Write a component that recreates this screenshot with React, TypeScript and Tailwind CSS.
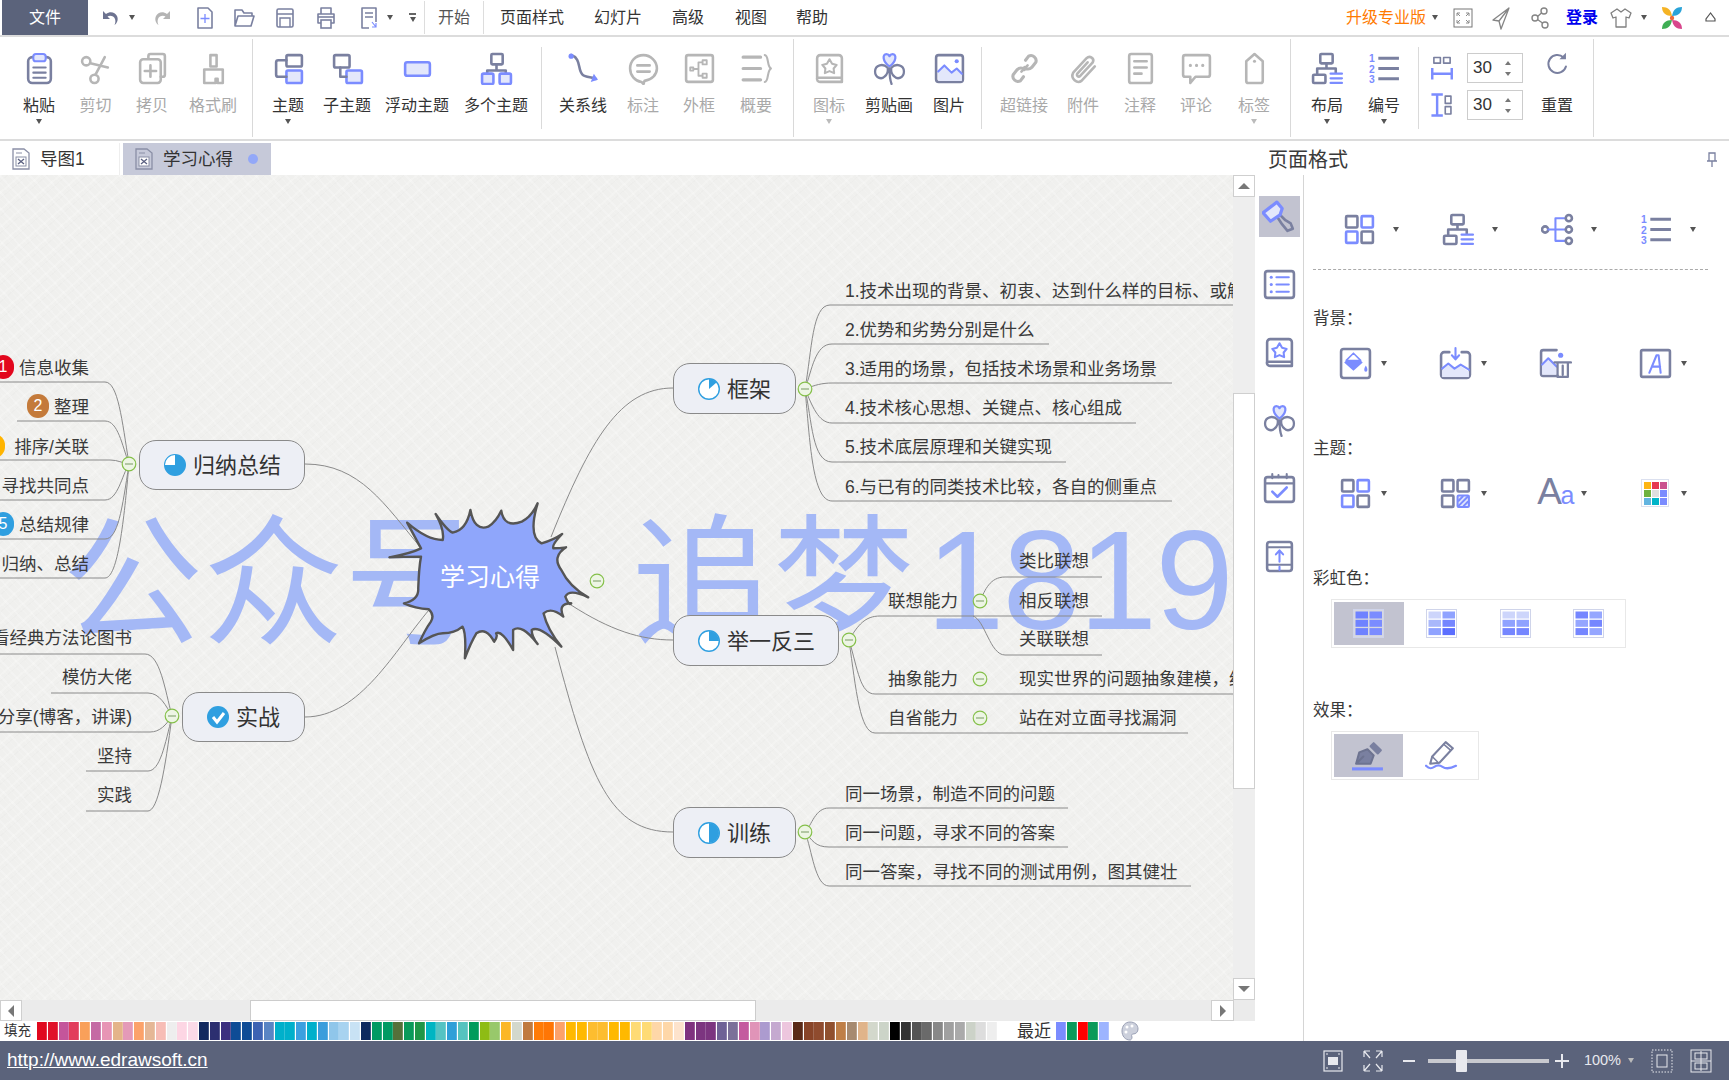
import React from "react";

const S = "#7a80a0";
const B = "#7b8cff";
const L = "#e3e7fb";
const G = "#b6b6b6";

type P = { s?: number; c?: string; children?: React.ReactNode };
const Ic = ({ s = 33, children }: P) => (
  <svg width={s} height={s} viewBox="0 0 32 32" fill="none" strokeWidth={2} strokeLinecap="round" strokeLinejoin="round" className="shrink-0">
    {children}
  </svg>
);

const Caret = ({ light }: { light?: boolean }) => (
  <span className={`block h-0 w-0 shrink-0 border-x-[3.5px] border-t-[5px] border-x-transparent ${light ? "border-t-[#bbbbbb]" : "border-t-[#555555]"}`} />
);

/* ---------- ribbon icons ---------- */
const Paste = () => (
  <Ic>
    <rect x="5" y="5" width="22" height="25" rx="4" stroke={S} strokeWidth="2.5" />
    <rect x="10" y="2" width="12" height="7" rx="2.5" fill={L} stroke={B} />
    <path d="M10 15h12M10 20h12M10 25h12" stroke={S} />
  </Ic>
);
const Cut = () => (
  <Ic>
    <circle cx="7" cy="9" r="4" stroke={G} strokeWidth="2.5" />
    <circle cx="15" cy="26" r="4" stroke={G} strokeWidth="2.5" />
    <path d="M11 11l17 4M16 22l9-17" stroke={G} strokeWidth="2.5" />
  </Ic>
);
const Copy = () => (
  <Ic>
    <path d="M12 6V4a2 2 0 012-2h12a2 2 0 012 2v18a2 2 0 01-2 2h-2" stroke={G} strokeWidth="2.5" />
    <rect x="4" y="7" width="20" height="23" rx="3" stroke={G} strokeWidth="2.5" />
    <path d="M14 13v11M8.500 18.500h11" stroke={G} strokeWidth="2.5" />
  </Ic>
);
const Brush = () => (
  <Ic>
    <path d="M13 3h6v11h-6zM7 17h18v13h-5v-4h-2v4H7z" stroke={G} strokeWidth="2.5" />
  </Ic>
);
const Topic = () => (
  <Ic>
    <rect x="14" y="3" width="15" height="11" rx="1.500" stroke={S} strokeWidth="2.5" />
    <rect x="14" y="18" width="15" height="12" rx="1.500" fill={L} stroke={B} strokeWidth="2.5" />
    <path d="M14 8H6a2 2 0 00-2 2v12a2 2 0 002 2h8" stroke={S} strokeWidth="2.5" />
  </Ic>
);
const SubTopic = () => (
  <Ic>
    <rect x="3" y="3" width="15" height="12" rx="1.500" stroke={S} strokeWidth="2.5" />
    <rect x="15" y="18" width="15" height="12" rx="1.500" fill={L} stroke={B} strokeWidth="2.5" />
    <path d="M9 15v9h6" stroke={S} strokeWidth="2.5" />
  </Ic>
);
const Float = () => (
  <Ic>
    <rect x="4" y="10" width="24" height="13" rx="2" fill={L} stroke={B} strokeWidth="2.5" />
  </Ic>
);
const Multi = () => (
  <Ic>
    <rect x="11" y="2" width="11" height="10" rx="1" stroke={S} strokeWidth="2.5" />
    <path d="M16 12v6M7 22v-4h18v4" stroke={S} strokeWidth="2.5" />
    <rect x="2" y="21" width="11" height="10" rx="1.500" fill={L} stroke={B} strokeWidth="2.5" />
    <rect x="19" y="21" width="11" height="10" rx="1.500" fill={L} stroke={B} strokeWidth="2.5" />
  </Ic>
);
const Relation = () => (
  <Ic>
    <path d="M4 3c10 3 6 14 11 19 3 3 9 2 13 4" stroke={S} strokeWidth="2.5" />
    <circle cx="4" cy="4" r="2.500" fill={B} />
    <path d="M26 21l4 6-7 2z" fill={B} />
  </Ic>
);
const Callout = () => (
  <Ic>
    <path d="M16 3C8 3 3 9 3 16c0 7 5 12 11 13l2 2 1-3c7-1 12-6 12-12 0-7-6-13-13-13z" stroke={G} strokeWidth="2.5" />
    <path d="M10 13h12M10 19h12" stroke={G} strokeWidth="2.5" />
  </Ic>
);
const Frame = () => (
  <Ic>
    <rect x="3" y="3" width="26" height="26" rx="2" stroke={G} strokeWidth="2.5" />
    <path d="M7 15h3v3H7zM10 16.500h5M15 10v13M15 10h3M15 23h3M19 8h4v4h-4zM19 21h4v4h-4z" stroke={G} strokeWidth="1.800" />
  </Ic>
);
const Summary = () => (
  <Ic>
    <path d="M3 5h17M3 16h17M3 27h17" stroke={G} strokeWidth="3" />
    <path d="M24 3c4 0 2 11 6 13-4 2-2 13-6 13" stroke={G} strokeWidth="2" />
  </Ic>
);
const Book = ({ c = G, a = G }: { c?: string; a?: string }) => (
  <Ic>
    <path d="M4 25V6a3 3 0 013-3h18a3 3 0 013 3v23H7a3 3 0 01-3-4zM4 25h24" stroke={c} strokeWidth="2.5" />
    <path d="M16 7l2.500 4.500 4.500 1-3 3.500.5 4.500-4.500-2-4.500 2 .5-4.500-3-3.500 4.500-1z" stroke={a} strokeWidth="2" />
  </Ic>
);
const Clover = () => (
  <Ic>
    <path d="M16 14c-7-5-7-12-3-12 2 0 3 2 3 2s1-2 3-2c4 0 4 7-3 12z" stroke={B} strokeWidth="2.2" fill={L} />
    <path d="M14 15c-4-4-12-3-12 4 0 6 6 8 9 5 3-2 4-6 3-9zM18 15c4-4 12-3 12 4 0 6-6 8-9 5-3-2-4-6-3-9zM16 16c0 6 0 10 2 15" stroke={S} strokeWidth="2.2" />
  </Ic>
);
const Pic = () => (
  <Ic>
    <rect x="3" y="3" width="26" height="26" rx="2.500" stroke={S} strokeWidth="2.5" />
    <path d="M5 19l6-6 7 7 5-4 5 5v7H5z" fill={L} />
    <path d="M5 19l6-6 7 7 5-4 5 5" stroke={B} strokeWidth="2" />
    <circle cx="23" cy="9" r="2" fill={B} />
  </Ic>
);
const Chain = () => (
  <Ic>
    <path d="M17 8l3-4a5 5 0 017 6l-4 5a5 5 0 01-7 0M15 24l-3 4a5 5 0 01-7-6l4-5a5 5 0 017 0" stroke={G} strokeWidth="3" />
    <path d="M13 19l6-6" stroke={G} strokeWidth="2.5" />
  </Ic>
);
const Clip = () => (
  <Ic>
    <path d="M27 14L14 28c-4 3-11-2-8-8L19 6c3-3 8 0 6 4L13 23c-2 2-4 0-3-2l10-11" stroke={G} strokeWidth="2.5" />
  </Ic>
);
const Note = () => (
  <Ic>
    <rect x="5" y="2" width="22" height="28" rx="2" stroke={G} strokeWidth="2.5" />
    <path d="M10 9h12M10 15h12M10 21h7" stroke={G} strokeWidth="2.5" />
  </Ic>
);
const Comment = () => (
  <Ic>
    <path d="M5 3h22a2 2 0 012 2v17a2 2 0 01-2 2H15l-5 6v-6H5a2 2 0 01-2-2V5a2 2 0 012-2z" stroke={G} strokeWidth="2.5" />
    <path d="M10 13h.1M16 13h.1M22 13h.1" stroke={G} strokeWidth="3" />
  </Ic>
);
const Tag = () => (
  <Ic>
    <path d="M8 9l8-7 8 7v19a2 2 0 01-2 2H10a2 2 0 01-2-2z" stroke={G} strokeWidth="2.5" />
    <circle cx="16" cy="9" r="1.500" fill={G} />
  </Ic>
);
const Layout = () => (
  <Ic>
    <rect x="9" y="2" width="12" height="9" rx="1" stroke={S} strokeWidth="2.5" />
    <path d="M15 11v5M6 22v-6h18v4" stroke={S} strokeWidth="2.5" />
    <rect x="2" y="22" width="12" height="8" rx="1" stroke={S} strokeWidth="2.5" />
    <path d="M19 21h11M19 25.500h11M19 30h11" stroke={B} strokeWidth="2.2" />
  </Ic>
);
const NumList = () => (
  <Ic>
    <path d="M10 6h20M10 16h20M10 26h20" stroke={S} strokeWidth="3" strokeLinecap="butt" />
    <text x="1" y="10" fontSize="10" fontWeight="700" fill={B} fontFamily="Liberation Sans">1</text>
    <text x="1" y="20" fontSize="10" fontWeight="700" fill={B} fontFamily="Liberation Sans">2</text>
    <text x="1" y="30" fontSize="10" fontWeight="700" fill={B} fontFamily="Liberation Sans">3</text>
  </Ic>
);
const SpaceH = () => (
  <Ic s={26}>
    <rect x="6" y="3" width="8" height="7" stroke={S} strokeWidth="2" />
    <rect x="18" y="3" width="8" height="7" stroke={S} strokeWidth="2" />
    <path d="M4 16v14M28 16v14M4 23h24" stroke={B} strokeWidth="3" strokeLinecap="butt" />
  </Ic>
);
const SpaceV = () => (
  <Ic s={26}>
    <rect x="20" y="5" width="7" height="9" stroke={S} strokeWidth="2" />
    <rect x="20" y="18" width="7" height="9" stroke={S} strokeWidth="2" />
    <path d="M3 3h14M3 29h14M10 3v26" stroke={B} strokeWidth="3" strokeLinecap="butt" />
  </Ic>
);
const Reset = () => (
  <svg width="26" height="26" viewBox="0 0 32 32" fill="none" className="shrink-0">
    <path d="M24 8a11 11 0 10 3 11" stroke={S} strokeWidth="2.5" strokeLinecap="round" />
    <path d="M27 2v8h-8z" fill={S} />
  </svg>
);

/* ---------- small top bar icons ---------- */
const D = "#858585";
const Undo = ({ flip, c = "#6d7390" }: { flip?: boolean; c?: string }) => (
  <svg width="20" height="20" viewBox="0 0 20 20" fill="none" className={`shrink-0 ${flip ? "-scale-x-100" : ""}`}>
    <path d="M3 3v8h7L7.500 8.500C10 7 14 8 15 11c.7 2 .5 4-.5 6 3-2 4-6 2.500-9C15 4 10 3 6 6z" fill={c} />
  </svg>
);
const TopNew = () => (
  <svg width="20" height="24" viewBox="0 0 20 24" fill="none" className="shrink-0">
    <path d="M3 2h10l4 4v16H3z" stroke={S} strokeWidth="1.600" strokeLinejoin="round" />
    <path d="M10 8v9M5.500 12.500h9" stroke={B} strokeWidth="1.300" />
  </svg>
);
const TopOpen = () => (
  <svg width="22" height="22" viewBox="0 0 22 22" fill="none" className="shrink-0">
    <path d="M2 19V3h7l2 3h8v3M2 19l3-10h16l-3 10z" stroke={S} strokeWidth="1.600" strokeLinejoin="round" />
  </svg>
);
const TopSave = () => (
  <svg width="20" height="22" viewBox="0 0 20 22" fill="none" className="shrink-0">
    <rect x="2" y="2" width="16" height="18" rx="1.500" stroke={S} strokeWidth="1.600" />
    <path d="M2 7h16M5 20V11h10v9" stroke={S} strokeWidth="1.400" />
  </svg>
);
const TopPrint = () => (
  <svg width="22" height="24" viewBox="0 0 22 24" fill="none" className="shrink-0">
    <path d="M6 8V2h10v6M6 17H3V8h16v9h-3" stroke={S} strokeWidth="1.600" strokeLinejoin="round" />
    <rect x="6" y="14" width="10" height="8" stroke={S} strokeWidth="1.600" />
    <path d="M3 11h16" stroke={S} strokeWidth="1.600" />
  </svg>
);
const TopPage = () => (
  <svg width="20" height="24" viewBox="0 0 20 24" fill="none" className="shrink-0">
    <path d="M10 22H3V2h14v14" stroke={S} strokeWidth="1.600" strokeLinejoin="round" />
    <path d="M6 7h8M6 11h8" stroke={S} strokeWidth="1.400" />
    <path d="M13 16l4 5M17 17v4h-4" stroke={B} strokeWidth="1.200" />
  </svg>
);
const More = () => (
  <span className="flex w-[7px] shrink-0 flex-col items-center gap-[2px]">
    <span className="h-[1.500px] w-[7px] bg-[#666666]" />
    <Caret />
  </span>
);
const FullBox = () => (
  <svg width="20" height="22" viewBox="0 0 20 22" fill="none" className="shrink-0">
    <rect x="1" y="2" width="18" height="18" stroke="#777777" strokeWidth="1" />
    <path d="M4 6l3 3M4 6h3M4 6v3M16 6l-3 3M16 6h-3M16 6v3M4 16l3-3M4 16h3M4 16v-3M16 16l-3-3M16 16h-3M16 16v-3" stroke="#8a8a8a" />
  </svg>
);
const Send = () => (
  <svg width="22" height="24" viewBox="0 0 22 24" fill="none" className="shrink-0">
    <path d="M19 2L3 14l6 1 2 8zM19 2L9 15M19 2l-8 21" stroke={D} strokeWidth="1.300" strokeLinejoin="round" />
  </svg>
);
const Share = () => (
  <svg width="20" height="24" viewBox="0 0 20 24" fill="none" className="shrink-0">
    <circle cx="14" cy="5" r="3" stroke={D} strokeWidth="1.400" />
    <circle cx="5" cy="12" r="3" stroke={D} strokeWidth="1.400" />
    <circle cx="15" cy="19" r="3" stroke={D} strokeWidth="1.400" />
    <path d="M7.500 10.500L11.500 7M7.500 13.500l5 3.500" stroke={D} strokeWidth="1.400" />
  </svg>
);
const Shirt = () => (
  <svg width="22" height="22" viewBox="0 0 22 22" fill="none" className="shrink-0">
    <path d="M7 2l4 3 4-3 6 4-2 5-3-1v10H6V10l-3 1-2-5z" stroke="#808080" strokeWidth="1.300" strokeLinejoin="round" />
  </svg>
);
const Logo = () => (
  <svg width="22" height="24" viewBox="0 0 22 24" className="shrink-0">
    <path d="M1 1c6 0 9 3 10 9-6 0-10-3-10-9z" fill="#f5b324" />
    <path d="M21 1c-6 0-9 3-10 9 6 0 10-3 10-9z" fill="#2aa3d8" />
    <path d="M1 23c6 0 9-3 10-9-6 0-10 3-10 9z" fill="#3fae54" />
    <path d="M21 23c-6 0-9-3-10-9 6 0 10 3 10 9z" fill="#d8468c" />
    <circle cx="11" cy="12" r="2.200" fill="#ef6a3a" />
  </svg>
);
const Up = () => (
  <svg width="13" height="13" viewBox="0 0 13 13" fill="none" className="shrink-0">
    <path d="M6.500 2L2 8v2h9V8z" stroke="#555555" strokeWidth="1.200" />
  </svg>
);
const Doc = () => (
  <svg width="20" height="24" viewBox="0 0 20 24" fill="none" className="shrink-0">
    <path d="M2 2h11l5 4v16H2z" stroke="#8a8fa6" strokeWidth="1.300" />
    <path d="M5 6h6" stroke="#8a8fa6" />
    <rect x="5" y="10" width="10" height="9" fill="#ffffff" stroke="#8a8fa6" />
    <path d="M7 12l6 5M13 12l-6 5" stroke="#5a6080" strokeWidth="1.300" />
  </svg>
);

/* ---------- ribbon parts ---------- */
const RB = ({ w, icon, label, off, caret }: { w: string; icon: React.ReactNode; label: string; off?: boolean; caret?: boolean }) => (
  <div className={`flex shrink-0 flex-col items-center pt-[16px] ${w}`}>
    <div className="flex h-[30px] items-center justify-center">{icon}</div>
    <div className={`mt-[13px] whitespace-nowrap text-[16px] leading-[20px] ${off ? "text-[#a9a9a9]" : "text-[#333333]"}`}>{label}</div>
    {caret ? <div className="mt-[3px]"><Caret light={off} /></div> : null}
  </div>
);
const SepFull = ({ m }: { m: string }) => <div className={`h-[98px] w-px shrink-0 self-center bg-[#d9d9d9] ${m}`} />;
const SepShort = ({ m }: { m: string }) => <div className={`h-[82px] w-px shrink-0 self-center bg-[#dadada] ${m}`} />;

const Spin = () => (
  <div className="flex h-[30px] w-[56px] items-center justify-between border border-[#cccccc] pl-[5px] pr-[11px] text-[17px] text-[#333333]">
    <span>30</span>
    <span className="flex flex-col gap-[7px]">
      <span className="block h-0 w-0 border-x-[3px] border-b-[4px] border-x-transparent border-b-[#777777]" />
      <span className="block h-0 w-0 border-x-[3px] border-t-[4px] border-x-transparent border-t-[#777777]" />
    </span>
  </div>
);

/* ---------- right rail and panel icons ---------- */
const RailBrush = () => (
  <Ic s={34}>
    <path d="M17 14l5 5 5 3 2 5-5 2-5-6-4-6" stroke={S} strokeWidth="2.5" />
    <path d="M1 12L14 2l5 6-2 6-9 6z" fill={L} stroke={B} strokeWidth="3" />
  </Ic>
);
const RailList = () => (
  <Ic>
    <rect x="2" y="3" width="28" height="26" rx="2.500" stroke={S} strokeWidth="2.5" />
    <path d="M13 9h12M13 16h12M13 23h12" stroke={B} strokeWidth="2" />
    <circle cx="8" cy="9" r="1.500" fill={B} />
    <circle cx="8" cy="16" r="1.500" fill={B} />
    <circle cx="8" cy="23" r="1.500" fill={B} />
  </Ic>
);
const RailCal = () => (
  <Ic>
    <rect x="2" y="5" width="28" height="24" rx="2.500" stroke={S} strokeWidth="2.5" />
    <path d="M2 11h28M9 2v4M23 2v4M15 3v2" stroke={S} strokeWidth="2" />
    <path d="M9 19l5 5 9-9" stroke={B} strokeWidth="2.5" />
  </Ic>
);
const RailUp = () => (
  <Ic>
    <rect x="4" y="2" width="24" height="28" rx="2.500" stroke={S} strokeWidth="2.5" />
    <path d="M4 7h24M4 24h24" stroke={S} strokeWidth="2" />
    <path d="M16 21V11M12.500 14L16 10l3.500 4M16 26v3" stroke={B} strokeWidth="2" />
  </Ic>
);
const Grid4 = ({ a = [1, 0, 0, 1] }: { a?: number[] }) => (
  <Ic>
    {[[3, 3], [18, 3], [3, 18], [18, 18]].map(([x, y], i) => (
      <rect key={i} x={x} y={y} width="11" height="11" rx="1" stroke={a[i] ? B : S} strokeWidth="2.5" />
    ))}
  </Ic>
);
const Grid4b = () => (
  <Ic>
    <rect x="3" y="3" width="11" height="11" rx="1" stroke={S} strokeWidth="2.5" />
    <rect x="18" y="3" width="11" height="11" rx="1" stroke={S} strokeWidth="2.5" />
    <rect x="3" y="18" width="11" height="11" rx="1" stroke={S} strokeWidth="2.5" />
    <rect x="18" y="18" width="11" height="11" rx="1" fill={L} stroke={B} strokeWidth="2" />
    <path d="M19 28l9-9M19 23l4-4M24 28l4-4" stroke={B} strokeWidth="2" />
  </Ic>
);
const Tree = () => (
  <Ic>
    <circle cx="4" cy="16" r="3" stroke={S} strokeWidth="2.5" />
    <path d="M7 16h7M14 5h9M14 16h9M14 27h9M14 5v22" stroke={B} strokeWidth="2" />
    <circle cx="27" cy="5" r="3" stroke={S} strokeWidth="2.5" />
    <circle cx="27" cy="16" r="3" stroke={S} strokeWidth="2.5" />
    <circle cx="27" cy="27" r="3" stroke={S} strokeWidth="2.5" />
  </Ic>
);
const BgFill = () => (
  <Ic>
    <rect x="2" y="2" width="28" height="28" rx="2.500" stroke={S} strokeWidth="2.5" />
    <path d="M5 15l9-9 9 9-9 8z" fill={B} />
    <path d="M7 13h14l-7-7z" fill="#ffffff" stroke={B} strokeWidth="1.500" />
    <path d="M26 18c-2 3-2 6 0 6s2-3 0-6z" fill={B} />
  </Ic>
);
const BgImg = () => (
  <Ic>
    <path d="M10 5H5a3 3 0 00-3 3v19a3 3 0 003 3h22a3 3 0 003-3V8a3 3 0 00-3-3h-5" stroke={S} strokeWidth="2.5" />
    <path d="M3 23l6-6 6 5 5-4 9 6v5H3z" fill={L} />
    <path d="M3 21l6-5 6 5 6-4 8 5" stroke={B} strokeWidth="2" />
    <path d="M16 1v10M12.500 8l3.500 4 3.500-4" stroke={B} strokeWidth="2" />
  </Ic>
);
const BgDel = () => (
  <Ic>
    <path d="M18 28H4a2 2 0 01-2-2V5a2 2 0 012-2h13" stroke={S} strokeWidth="2.5" />
    <path d="M3 17l6-6 8 8v8H3z" fill={L} />
    <path d="M3 17l6-6 8 8" stroke={B} strokeWidth="2" />
    <circle cx="21" cy="8" r="2.500" fill={B} />
    <path d="M15 15h16M18 15v14h10V15M23 18v9" stroke={S} strokeWidth="2.2" />
  </Ic>
);
const BgA = () => (
  <Ic>
    <rect x="2" y="3" width="28" height="26" rx="1.500" stroke={S} strokeWidth="2.5" />
    <path d="M10 25L17 8h2l2 17M12.500 19h8" stroke={B} strokeWidth="2" />
  </Ic>
);
const Aa = () => (
  <span className="flex h-[32px] w-[32px] items-end justify-center whitespace-nowrap leading-none tracking-[-1.500px]">
    <span className="text-[37px] leading-[34px] text-[#7a80a0]">A</span>
    <span className="text-[25px] leading-[28px] text-[#7b8cff]">a</span>
  </span>
);
const ThemeColors = () => {
  const c = ["#fdb515", "#e63950", "#c9518f", "#6eb23f", "#dedede", "#7b8cff", "#62b4e0", "#00b4c8", "#7b8cff"];
  return (
    <span className="grid h-[28px] w-[28px] grid-cols-3 gap-[1px] border border-[#dbe0ef] p-[1.500px]">
      {c.map((x, i) => (
        <svg key={i} viewBox="0 0 8 7" className="h-full w-full" preserveAspectRatio="none"><rect width="8" height="7" fill={x} /></svg>
      ))}
    </span>
  );
};
const Rainbow = ({ c }: { c: string[] }) => (
  <svg width="31" height="29" viewBox="0 0 31 29" className="shrink-0">
    <rect x="0.500" y="0.500" width="30" height="28" fill="#ffffff" fillOpacity="0.350" stroke="#cfd4ea" />
    {c.map((x, i) => (
      <rect key={i} x={i % 2 ? 16.500 : 2.500} y={2.500 + Math.floor(i / 2) * 8.300} width="12.500" height="7" fill={x} />
    ))}
  </svg>
);
const PenA = () => (
  <Ic>
    <path d="M4 24l3-11 8-3 6 6-3 8zM4 24l7-7" stroke="#6d7390" strokeWidth="2" fill="#7a80a0" />
    <path d="M18 7l3-3 7 7-3 3z" fill="#7a80a0" stroke="#7a80a0" />
    <path d="M0 29h30" stroke={B} strokeWidth="3" strokeLinecap="butt" />
  </Ic>
);
const PenB = () => (
  <Ic>
    <path d="M5 24l2-7L20 3l7 6-13 14z" stroke={S} strokeWidth="2" />
    <path d="M18 5l7 6M7 17l6 6" stroke={S} strokeWidth="1.500" />
    <path d="M1 26c3 3 5 3 8 1s5-2 8 0 7 2 13-1" stroke={B} strokeWidth="2.2" />
  </Ic>
);

const IconCell = ({ icon, caret, w, m }: { icon: React.ReactNode; caret?: boolean; w: string; m: string }) => (
  <div className={`flex h-[32px] shrink-0 items-center ${w}`}>
    <div className="flex h-[32px] w-[32px] items-center justify-center">{icon}</div>
    {caret ? <div className={m}><Caret /></div> : null}
  </div>
);

/* ---------- status bar icons ---------- */
const W = "#e8e9ee";
const StatusFit = () => (
  <svg width="20" height="22" viewBox="0 0 20 22" fill="none" className="shrink-0">
    <rect x="1" y="1" width="18" height="20" stroke={W} strokeWidth="1.200" />
    <rect x="5" y="7" width="10" height="8" fill={W} />
    <path d="M3 4h2M15 4h2M3 18h2M15 18h2" stroke={W} />
  </svg>
);
const StatusFull = () => (
  <svg width="22" height="24" viewBox="0 0 22 24" fill="none" className="shrink-0">
    <path d="M2 2l6 7M2 2h6M2 2v6M20 2l-6 7M20 2h-6M20 2v6M2 22l6-7M2 22h6M2 22v-6M20 22l-6-7M20 22h-6M20 22v-6" stroke={W} strokeWidth="1.200" />
  </svg>
);
const StatusPage = () => (
  <svg width="22" height="24" viewBox="0 0 22 24" fill="none" className="shrink-0">
    <rect x="1" y="1" width="20" height="22" stroke={W} strokeDasharray="1.500 1.500" />
    <rect x="6" y="6" width="10" height="12" stroke={W} />
  </svg>
);
const StatusPage2 = () => (
  <svg width="22" height="24" viewBox="0 0 22 24" fill="none" className="shrink-0">
    <rect x="1" y="1" width="20" height="22" stroke={W} />
    <rect x="5" y="4" width="12" height="6" stroke={W} />
    <rect x="5" y="14" width="12" height="6" stroke={W} />
    <path d="M1 12h20M11 2v20" stroke={W} />
  </svg>
);
const PaletteIcon = () => (
  <svg width="18" height="20" viewBox="0 0 18 20" fill="none" className="shrink-0">
    <path d="M9 1c5 0 8 3 8 7 0 3-2 5-5 5-1 0-2 1-1 3 0 2-1 3-2 3-5 0-8-4-8-9s3-9 8-9z" fill="#ccd0dc" stroke="#9aa0b5" />
    <circle cx="6" cy="6" r="1.500" fill="#ffffff" />
    <circle cx="11" cy="5" r="1.500" fill="#ffffff" />
    <circle cx="5" cy="11" r="1.500" fill="#ffffff" />
  </svg>
);

const SWATCH = [
  "#e0081e","#e0122a","#c4559b","#e23d5c","#f9a05a","#c56aa4","#e795b5","#e4b48a","#e49ab8","#fca26a","#e5b796","#f7bdb6","#eeeeee","#fdd6e4","#fbdae8",
  "#12295f","#2c2f70","#3b2f7f","#0e4c96","#0e4c96","#3d63b3","#5985c4","#00b0cb","#00b0cb","#3ba0e0","#00b0cb","#3a9ddc","#8fc6ea","#a8d3f0","#c8e2f4",
  "#0e295e","#009a63","#009a63","#55703a","#0a9a5a","#1f9647","#00b5c2","#55c3c3","#2f9fd8","#55c3bf","#009b5c","#8ebc14","#98c86b","#fbb726","#d3d8cc",
  "#c07a3e","#ff7b06","#ff7605","#fca26a","#ffb900","#ffb900","#fdbd2f","#fdbd2f","#ffb900","#ffb900","#fedb75","#fedb75","#fed7a8","#fed7a8","#fde3cc",
  "#7f327f","#7c3580","#7c3580","#6f6296","#7b7099","#c45a9f","#e094b8","#ac9bcf","#c5a9d0","#edc6de",
  "#5a2a18","#884428","#8f4b2e","#90502e","#bf7f47","#a68a70","#e0b48a","#d3d8cc","#ccd4c8",
  "#000000","#333333","#555555","#6a6a6a","#888888","#a0a0a0","#aaaaaa","#ccd2c8","#dddddd","#eeeeee",
];

/* ---------- mind map ---------- */
const Pie = ({ kind }: { kind: "q3" | "e" | "q" | "h" | "ok" }) => (
  <svg width="22" height="24" viewBox="0 0 22 24" className="shrink-0">
    {kind === "ok" ? (
      <>
        <circle cx="11" cy="12" r="11" fill="#2f9fe0" />
        <path d="M6 12l4 5 7-9" stroke="#ffffff" strokeWidth="3" fill="none" />
      </>
    ) : (
      <>
        <circle cx="11" cy="12" r="10.300" fill={kind === "q3" ? "#2f9fe0" : "#ffffff"} stroke="#2f9fe0" strokeWidth="1.400" />
        {kind === "q3" ? <path d="M11 12V2a10 10 0 00-10 10z" fill="#ffffff" /> : null}
        {kind === "e" ? <path d="M11 12V2a10 10 0 017.500 3.500z" fill="#2f9fe0" /> : null}
        {kind === "q" ? <path d="M11 12V2a10 10 0 0110 10z" fill="#2f9fe0" /> : null}
        {kind === "h" ? <path d="M11 2a10 10 0 010 20z" fill="#2f9fe0" /> : null}
      </>
    )}
  </svg>
);

const Node = ({ cls, kind, text }: { cls: string; kind: "q3" | "e" | "q" | "h" | "ok"; text: string }) => (
  <div className={`absolute flex items-center gap-[7px] rounded-[17px] border border-[#8a8a8a] bg-[#edeff5] pl-[24px] text-[22px] leading-none text-[#333333] ${cls}`}>
    <Pie kind={kind} />
    <span className="whitespace-nowrap pt-[2px]">{text}</span>
  </div>
);

const T = ({ cls, children }: { cls: string; children: React.ReactNode }) => (
  <div className={`absolute whitespace-nowrap text-[17.500px] leading-[20px] text-[#3a3a3a] ${cls}`}>{children}</div>
);

const Dot = ({ cls, bg, n }: { cls: string; bg: string; n: string }) => (
  <div className={`absolute flex h-[24px] w-[22px] items-center justify-center rounded-full text-[16px] text-white ${cls} ${bg}`}>{n}</div>
);

const LINES = [
  "M0 382H105C118 382 122 420 129 464","M17 421H105C118 421 122 445 129 464","M0 460H110C118 460 122 463 129 464","M0 500H105C118 500 122 475 129 464","M0 539H105C118 539 122 510 129 464","M0 578H105C118 578 124 520 129 464",
  "M0 654H145C160 654 165 690 172 716","M51 693H148C160 693 166 706 172 716","M0 732H150C160 732 166 725 172 716","M86 771H148C160 771 165 745 172 716","M86 811H148C158 811 165 770 172 716",
  "M305 464C360 464 385 505 421 548","M305 717C360 717 395 650 429 610","M673 388C620 388 590 440 551 537","M673 640C640 640 610 630 571 605","M673 832C610 832 590 780 555 647",
  "M805 389C812 350 812 305 830 305H1233","M805 389C812 370 815 344 832 344H1049","M805 389C815 385 822 383 832 383H1172","M805 389C812 405 818 423 832 423H1136","M805 389C812 420 812 462 832 462H1066","M805 389C810 440 812 501 832 501H1172",
  "M805 832C812 825 815 808 829 808H1068","M805 832C812 840 815 847 829 847H1068","M805 832C812 850 815 886 829 886H1191",
  "M849 640C858 625 865 616 880 616H1102","M980 601C985 590 990 577 1005 577H1102","M973 616C985 620 990 655 1005 655H1102","M849 640C858 670 860 694 875 694H1233","M849 640C856 690 860 733 875 733H1188",
];
const COLLAPSE: [number, number][] = [[129,464],[172,716],[597,581],[805,389],[849,640],[980,601],[980,679],[980,718],[805,832]];

const Burst = () => (
  <g transform="translate(0 340) scale(0.3953 0.3333)">
    <path
      vectorEffect="non-scaling-stroke"
      d="M1145 578Q1180 570 1190 510Q1200 575 1235 560Q1255 545 1268 512Q1275 565 1320 545Q1345 530 1360 490Q1335 590 1370 610Q1400 600 1422 582Q1395 615 1400 625Q1415 625 1432 622Q1395 650 1420 690Q1440 740 1488 772Q1440 745 1430 770Q1440 800 1445 790Q1410 790 1425 830Q1395 800 1375 820Q1385 870 1420 920Q1365 855 1345 870Q1345 890 1360 912Q1320 850 1298 870Q1298 900 1298 930Q1270 870 1255 880Q1260 890 1250 905Q1230 860 1205 880Q1190 910 1176 955Q1180 880 1170 860Q1150 880 1120 880Q1100 880 1060 910Q1075 870 1090 845Q1100 825 1085 808Q1050 805 1022 790Q1060 780 1058 745Q1060 680 1065 650Q1020 650 985 652Q1040 640 1065 625Q1040 570 1030 548Q1080 600 1120 600Q1125 570 1102 522Q1130 570 1145 578Z"
      fill="#8fa6fb"
      stroke="#555555"
      strokeWidth="2.400"
      strokeLinejoin="round"
    />
  </g>
);

const MindMap = () => (
  <div className="relative h-full w-[1233px] shrink-0 overflow-hidden bg-[#f0f0ee] bg-[repeating-linear-gradient(47deg,rgba(255,255,255,0.22)_0px,rgba(255,255,255,0.22)_2px,transparent_2px,transparent_7px,rgba(255,255,255,0.12)_7px,rgba(255,255,255,0.12)_8px,transparent_8px,transparent_11px),repeating-linear-gradient(-41deg,rgba(255,255,255,0.2)_0px,rgba(255,255,255,0.2)_2px,transparent_2px,transparent_9px,rgba(120,120,120,0.025)_9px,rgba(120,120,120,0.025)_10px,transparent_10px,transparent_13px)]">
    <div className="absolute left-[62px] top-[320px] whitespace-nowrap text-[141px] leading-[170px] text-[#a4b8f6]">
      公众号　<span className="ml-[6px]">追梦</span><span className="ml-[12px] align-[4px] tracking-[-2px]">1819</span>
    </div>
    <svg className="absolute left-0 top-[-175px]" width="1233" height="1000" viewBox="0 0 1233 1000" fill="none">
      {LINES.map((d, i) => (
        <path key={i} d={d} stroke="#8a8a8a" strokeWidth="1" />
      ))}
      <Burst />
      {COLLAPSE.map(([x, y], i) => (
        <g key={i}>
          <circle cx={x} cy={y} r="6.800" fill="#edf5e4" stroke="#85c04a" strokeWidth="1.200" />
          <path d={`M${x - 4} ${y}h8`} stroke="#8aa878" strokeWidth="1.200" />
        </g>
      ))}
    </svg>
    <div className="absolute left-[440px] top-[384px] whitespace-nowrap text-[25px] leading-[36px] text-white">学习心得</div>

    <Node cls="left-[139px] top-[265px] h-[50px] w-[166px]" kind="q3" text="归纳总结" />
    <Node cls="left-[182px] top-[517px] h-[50px] w-[123px]" kind="ok" text="实战" />
    <Node cls="left-[673px] top-[188px] h-[51px] w-[123px]" kind="e" text="框架" />
    <Node cls="left-[673px] top-[440px] h-[51px] w-[166px]" kind="q" text="举一反三" />
    <Node cls="left-[673px] top-[632px] h-[51px] w-[123px]" kind="h" text="训练" />

    <Dot cls="left-[-8px] top-[180px]" bg="bg-[#e2071d]" n="1" />
    <T cls="right-[1144px] top-[183px]">信息收集</T>
    <Dot cls="left-[27px] top-[219px]" bg="bg-[#c47a3a]" n="2" />
    <T cls="right-[1144px] top-[222px]">整理</T>
    <Dot cls="left-[-17px] top-[259px]" bg="bg-[#ffb400]" n="3" />
    <T cls="right-[1144px] top-[262px]">排序/关联</T>
    <T cls="right-[1144px] top-[301px]">寻找共同点</T>
    <Dot cls="left-[-8px] top-[337px]" bg="bg-[#2f9fe0]" n="5" />
    <T cls="right-[1144px] top-[340px]">总结规律</T>
    <T cls="right-[1144px] top-[379px]">归纳、总结</T>

    <T cls="right-[1101px] top-[453px]">看经典方法论图书</T>
    <T cls="right-[1101px] top-[492px]">模仿大佬</T>
    <T cls="right-[1101px] top-[532px]">分享(博客，讲课)</T>
    <T cls="right-[1101px] top-[571px]">坚持</T>
    <T cls="right-[1101px] top-[610px]">实践</T>

    <T cls="left-[845px] top-[106px]">1.技术出现的背景、初衷、达到什么样的目标、或解决什么样的问题</T>
    <T cls="left-[845px] top-[145px]">2.优势和劣势分别是什么</T>
    <T cls="left-[845px] top-[184px]">3.适用的场景，包括技术场景和业务场景</T>
    <T cls="left-[845px] top-[223px]">4.技术核心思想、关键点、核心组成</T>
    <T cls="left-[845px] top-[262px]">5.技术底层原理和关键实现</T>
    <T cls="left-[845px] top-[302px]">6.与已有的同类技术比较，各自的侧重点</T>

    <T cls="left-[888px] top-[416px]">联想能力</T>
    <T cls="left-[1019px] top-[376px]">类比联想</T>
    <T cls="left-[1019px] top-[416px]">相反联想</T>
    <T cls="left-[1019px] top-[454px]">关联联想</T>
    <T cls="left-[888px] top-[494px]">抽象能力</T>
    <T cls="left-[1019px] top-[494px]">现实世界的问题抽象建模，给出解决方案</T>
    <T cls="left-[888px] top-[533px]">自省能力</T>
    <T cls="left-[1019px] top-[533px]">站在对立面寻找漏洞</T>

    <T cls="left-[845px] top-[609px]">同一场景，制造不同的问题</T>
    <T cls="left-[845px] top-[648px]">同一问题，寻求不同的答案</T>
    <T cls="left-[845px] top-[687px]">同一答案，寻找不同的测试用例，图其健壮</T>
  </div>
);

export default function App() {
  return (
    <div className="flex h-[1080px] w-[1729px] flex-col overflow-hidden bg-white font-['Liberation_Sans','Noto_Sans_CJK_SC',sans-serif] text-[#333333]">
      {/* title bar */}
      <div className="flex h-[37px] shrink-0 items-center border-b-2 border-[#dcdcdc] text-[16px]">
        <div className="ml-[2px] flex h-[35px] w-[86px] shrink-0 items-center justify-center bg-[#5b637b] text-white">文件</div>
        <div className="ml-[12px]"><Undo /></div>
        <div className="ml-[9px]"><Caret /></div>
        <div className="ml-[18px]"><Undo flip c="#b4b4b4" /></div>
        <div className="ml-[22px]"><TopNew /></div>
        <div className="ml-[18px]"><TopOpen /></div>
        <div className="ml-[20px]"><TopSave /></div>
        <div className="ml-[20px]"><TopPrint /></div>
        <div className="ml-[22px]"><TopPage /></div>
        <div className="ml-[8px]"><Caret /></div>
        <div className="ml-[16px]"><More /></div>
        <div className="ml-[8px] h-[33px] w-px bg-[#dddddd]" />
        <div className="ml-[13px] text-[#555555]">开始</div>
        <div className="ml-[13px] h-[33px] w-px bg-[#dddddd]" />
        <div className="ml-[16px] whitespace-nowrap">页面样式</div>
        <div className="ml-[30px] whitespace-nowrap">幻灯片</div>
        <div className="ml-[30px] whitespace-nowrap">高级</div>
        <div className="ml-[31px] whitespace-nowrap">视图</div>
        <div className="ml-[29px] whitespace-nowrap">帮助</div>
        <div className="ml-auto whitespace-nowrap text-[#ff7a00]">升级专业版</div>
        <div className="ml-[6px]"><Caret /></div>
        <div className="ml-[15px]"><FullBox /></div>
        <div className="ml-[17px]"><Send /></div>
        <div className="ml-[18px]"><Share /></div>
        <div className="ml-[16px] whitespace-nowrap font-bold text-[#0000ee]">登录</div>
        <div className="ml-[12px]"><Shirt /></div>
        <div className="ml-[9px]"><Caret /></div>
        <div className="ml-[14px]"><Logo /></div>
        <div className="ml-[21px] mr-[12px]"><Up /></div>
      </div>

      {/* ribbon */}
      <div className="flex h-[104px] shrink-0 border-b-2 border-[#dcdcdc] pl-[11px]">
        <RB w="w-[56px]" icon={<Paste />} label="粘贴" caret />
        <RB w="w-[57px]" icon={<Cut />} label="剪切" off />
        <RB w="w-[56px]" icon={<Copy />} label="拷贝" off />
        <RB w="w-[66px]" icon={<Brush />} label="格式刷" off />
        <SepFull m="ml-[6px]" />
        <div className="w-[7px] shrink-0" />
        <RB w="w-[56px]" icon={<Topic />} label="主题" caret />
        <RB w="w-[62px]" icon={<SubTopic />} label="子主题" />
        <RB w="w-[78px]" icon={<Float />} label="浮动主题" />
        <RB w="w-[80px]" icon={<Multi />} label="多个主题" />
        <SepShort m="ml-[5px]" />
        <div className="w-[3px] shrink-0" />
        <RB w="w-[76px]" icon={<Relation />} label="关系线" />
        <RB w="w-[44px]" icon={<Callout />} label="标注" off />
        <RB w="w-[68px]" icon={<Frame />} label="外框" off />
        <RB w="w-[46px]" icon={<Summary />} label="概要" off />
        <SepFull m="ml-[14px]" />
        <RB w="w-[70px]" icon={<Book />} label="图标" off caret />
        <RB w="w-[50px]" icon={<Clover />} label="剪贴画" />
        <div className="w-[10px] shrink-0" />
        <RB w="w-[50px]" icon={<Pic />} label="图片" />
        <SepShort m="ml-[7px]" />
        <RB w="w-[84px]" icon={<Chain />} label="超链接" off />
        <RB w="w-[34px]" icon={<Clip />} label="附件" off />
        <RB w="w-[80px]" icon={<Note />} label="注释" off />
        <RB w="w-[32px]" icon={<Comment />} label="评论" off />
        <div className="w-[14px] shrink-0" />
        <RB w="w-[56px]" icon={<Tag />} label="标签" off caret />
        <SepFull m="ml-[8px]" />
        <div className="w-[8px] shrink-0" />
        <RB w="w-[56px]" icon={<Layout />} label="布局" caret />
        <RB w="w-[58px]" icon={<NumList />} label="编号" caret />
        <SepShort m="ml-[5px]" />
        <div className="ml-[10px] flex shrink-0 flex-col gap-[7px] pt-[16px]">
          <div className="flex items-center gap-[12px]"><SpaceH /><Spin /></div>
          <div className="flex items-center gap-[12px]"><SpaceV /><Spin /></div>
        </div>
        <div className="ml-[12px] flex w-[44px] shrink-0 flex-col items-center pt-[14px]">
          <div className="flex h-[26px] items-center"><Reset /></div>
          <div className="mt-[19px] whitespace-nowrap text-[16px] leading-[20px]">重置</div>
        </div>
        <SepFull m="ml-[14px]" />
      </div>

      {/* body */}
      <div className="flex min-h-0 flex-1">
        <div className="flex w-[1255px] shrink-0 flex-col">
          {/* tabs */}
          <div className="flex h-[34px] shrink-0 items-end bg-white">
            <div className="flex h-[32px] w-[120px] shrink-0 items-center border-r border-[#eeeeee] pl-[11px] text-[17.500px]">
              <Doc />
              <span className="ml-[9px] whitespace-nowrap">导图1</span>
            </div>
            <div className="ml-[3px] flex h-[32px] w-[148px] shrink-0 items-center bg-[#c6c9d9] pl-[11px] text-[17.500px]">
              <Doc />
              <span className="ml-[9px] whitespace-nowrap">学习心得</span>
              <span className="ml-[15px] h-[10px] w-[10px] rounded-full bg-[#93a8f8]" />
            </div>
          </div>
          {/* canvas and vertical scrollbar */}
          <div className="flex min-h-0 flex-1">
            <MindMap />
            <div className="flex w-[22px] shrink-0 flex-col bg-[#eeeeee]">
              <div className="flex h-[22px] shrink-0 items-center justify-center border border-[#cfcfcf] bg-white">
                <span className="block h-0 w-0 border-x-[6px] border-b-[6px] border-x-transparent border-b-[#777777]" />
              </div>
              <div className="mt-[196px] h-[396px] shrink-0 border border-[#cfcfcf] bg-white" />
              <div className="mt-auto flex h-[22px] shrink-0 items-center justify-center border border-[#cfcfcf] bg-white">
                <span className="block h-0 w-0 border-x-[6px] border-t-[6px] border-x-transparent border-t-[#777777]" />
              </div>
            </div>
          </div>
          {/* horizontal scrollbar */}
          <div className="flex h-[21px] shrink-0 bg-[#ebebeb]">
            <div className="flex w-[22px] shrink-0 items-center justify-center border border-[#cfcfcf] bg-white">
              <span className="block h-0 w-0 border-y-[6px] border-r-[6px] border-y-transparent border-r-[#777777]" />
            </div>
            <div className="ml-[228px] w-[506px] shrink-0 border border-[#cccccc] bg-white" />
            <div className="ml-[455px] flex w-[23px] shrink-0 items-center justify-center border border-[#cfcfcf] bg-white">
              <span className="block h-0 w-0 border-y-[6px] border-l-[6px] border-y-transparent border-l-[#777777]" />
            </div>
          </div>
          {/* palette */}
          <div className="flex h-[20px] shrink-0 items-stretch bg-white pb-[1px] pt-[1px]">
            <div className="ml-[4px] flex w-[33px] shrink-0 items-center text-[13.500px] leading-none">填充</div>
            {SWATCH.map((c, i) => (
              <svg key={i} width="10.800" height="18" className="shrink-0"><rect width="9.800" height="18" fill={c} /></svg>
            ))}
            <div className="ml-[19px] flex w-[39px] shrink-0 items-center whitespace-nowrap text-[17px] leading-none">最近</div>
            {["#7b8cff", "#0a9a5a", "#ff0000", "#0a9a5a", "#9db4ff"].map((c, i) => (
              <svg key={i} width="10.800" height="18" className="shrink-0"><rect width="9.800" height="18" fill={c} /></svg>
            ))}
            <div className="ml-[11px] flex items-center"><PaletteIcon /></div>
          </div>
        </div>

        {/* right panel */}
        <div className="flex min-w-0 flex-1 flex-col">
          <div className="flex h-[34px] shrink-0 items-center justify-between pl-[13px] pr-[11px] pt-[3px]">
            <span className="whitespace-nowrap text-[20px] text-[#3a3a3a]">页面格式</span>
            <svg width="12" height="16" viewBox="0 0 12 16" fill="none">
              <path d="M3 1h6v8H3zM1 9h10M6 9v6" stroke="#7a80a0" strokeWidth="1.300" />
            </svg>
          </div>
          <div className="flex min-h-0 flex-1">
            {/* rail */}
            <div className="flex w-[49px] shrink-0 flex-col items-center gap-[27px] border-r border-[#d5d5d5] pt-[21px]">
              <div className="flex h-[41px] w-[41px] items-center justify-center bg-[#c2c3d0]"><RailBrush /></div>
              <div className="flex h-[41px] items-center"><RailList /></div>
              <div className="flex h-[41px] items-center"><Book c={S} a={B} /></div>
              <div className="flex h-[41px] items-center"><Clover /></div>
              <div className="flex h-[41px] items-center"><RailCal /></div>
              <div className="flex h-[41px] items-center"><RailUp /></div>
            </div>
            {/* format content */}
            <div className="min-w-0 flex-1 pt-[38px] text-[16.500px] leading-[24px] text-[#3a3a3a]">
              <div className="flex pl-[39px]">
                <IconCell w="w-[99px]" m="ml-[18px]" caret icon={<Grid4 a={[0, 1, 1, 0]} />} />
                <IconCell w="w-[99px]" m="ml-[18px]" caret icon={<Layout />} />
                <IconCell w="w-[99px]" m="ml-[18px]" caret icon={<Tree />} />
                <IconCell w="w-[99px]" m="ml-[18px]" caret icon={<NumList />} />
              </div>
              <div className="ml-[9px] mt-[24px] w-[395px] border-t border-dashed border-[#aaaaaa]" />
              <div className="ml-[9px] mt-[36px]">背景：</div>
              <div className="mt-[17px] flex pl-[35px]">
                <IconCell w="w-[100px]" m="ml-[10px]" caret icon={<BgFill />} />
                <IconCell w="w-[100px]" m="ml-[10px]" caret icon={<BgImg />} />
                <IconCell w="w-[100px]" m="ml-[10px]" icon={<BgDel />} />
                <IconCell w="w-[100px]" m="ml-[10px]" caret icon={<BgA />} />
              </div>
              <div className="ml-[9px] mt-[57px]">主题：</div>
              <div className="mt-[17px] flex pl-[35px]">
                <IconCell w="w-[100px]" m="ml-[10px]" caret icon={<Grid4 a={[0, 1, 1, 0]} />} />
                <IconCell w="w-[100px]" m="ml-[10px]" caret icon={<Grid4b />} />
                <IconCell w="w-[100px]" m="ml-[10px]" caret icon={<Aa />} />
                <IconCell w="w-[100px]" m="ml-[10px]" caret icon={<ThemeColors />} />
              </div>
              <div className="ml-[9px] mt-[57px]">彩虹色：</div>
              <div className="ml-[27px] mt-[9px] flex h-[49px] w-[295px] gap-[3.500px] border border-[#e8e8e8] p-[2px]">
                <div className="flex w-[70px] items-center justify-center bg-[#c2c3d0]">
                  <Rainbow c={["#6f82ff", "#7b8cff", "#6f82ff", "#7b8cff", "#6f82ff", "#7b8cff"]} />
                </div>
                <div className="flex w-[70px] items-center justify-center">
                  <Rainbow c={["#cdd5fb", "#8fa2ff", "#a9b8fb", "#7586ff", "#8fa2ff", "#5b6eff"]} />
                </div>
                <div className="flex w-[70px] items-center justify-center">
                  <Rainbow c={["#cdd5fb", "#cdd5fb", "#8fa2ff", "#8fa2ff", "#7586ff", "#7586ff"]} />
                </div>
                <div className="flex w-[70px] items-center justify-center">
                  <Rainbow c={["#7586ff", "#95a6ff", "#95a6ff", "#7586ff", "#7586ff", "#95a6ff"]} />
                </div>
              </div>
              <div className="ml-[9px] mt-[50px]">效果：</div>
              <div className="ml-[27px] mt-[9px] flex h-[49px] w-[148px] gap-[3.500px] border border-[#e8e8e8] p-[2px]">
                <div className="flex w-[70px] items-center justify-center bg-[#c2c3d0]"><PenA /></div>
                <div className="flex w-[70px] items-center justify-center"><PenB /></div>
              </div>
            </div>
          </div>
        </div>
      </div>

      {/* status bar */}
      <div className="flex h-[39px] shrink-0 items-center bg-[#5b637b] text-[#e8e9ee]">
        <span className="ml-[7px] whitespace-nowrap text-[19px] text-white underline">http://www.edrawsoft.cn</span>
        <div className="ml-auto"><StatusFit /></div>
        <div className="ml-[19px]"><StatusFull /></div>
        <div className="ml-[19px] h-[2px] w-[12px] bg-[#e8e9ee]" />
        <div className="relative ml-[13px] h-[4px] w-[121px] bg-[#c8c9cf]">
          <div className="absolute left-[28px] top-[-9px] h-[22px] w-[11px] rounded-[1px] bg-[#e8e9ee]" />
        </div>
        <div className="relative ml-[6px] h-[14px] w-[14px]">
          <div className="absolute left-0 top-[6px] h-[2px] w-[14px] bg-[#e8e9ee]" />
          <div className="absolute left-[6px] top-0 h-[14px] w-[2px] bg-[#e8e9ee]" />
        </div>
        <div className="ml-[15px] whitespace-nowrap text-[14.500px]">100%</div>
        <div className="ml-[7px]"><Caret light /></div>
        <div className="ml-[17px]"><StatusPage /></div>
        <div className="ml-[17px] mr-[17px]"><StatusPage2 /></div>
      </div>
    </div>
  );
}
